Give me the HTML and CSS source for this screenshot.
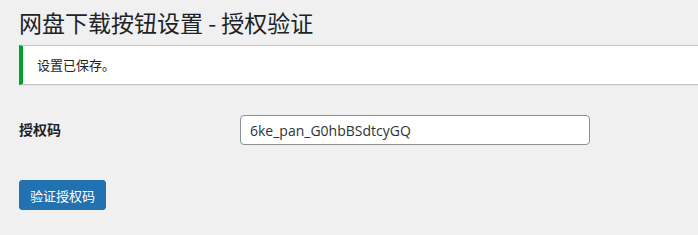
FILE: index.html
```html
<!DOCTYPE html>
<html>
<head>
<meta charset="utf-8">
<title>网盘下载按钮设置 - 授权验证</title>
<link rel="stylesheet" href="styles.css">
</head>
<body>
<div class="wrap">
	<h1 class="title">网盘下载按钮设置 - 授权验证</h1>
	<div class="notice">
		<p>设置已保存。</p>
	</div>
	<form class="form">
		<div class="row">
			<label class="label" for="code">授权码</label>
			<input id="code" class="field" type="text" value="6ke_pan_G0hbBSdtcyGQ">
		</div>
		<div class="submit">
			<button type="button" class="btn">验证授权码</button>
		</div>
	</form>
</div>
</body>
</html>
```

FILE: styles.css
```css
*{ margin:0; padding:0; box-sizing:border-box;}
html, body{ overflow:hidden;}
body{ background:#f0f0f1; color:#1d2327; font:13px/1.4 "Noto Sans","Noto Sans CJK SC",sans-serif;}
.wrap{ padding:7px 0 0 19px; margin-right:-12px;}
.title{ font-size:23px; font-weight:400; line-height:30px; color:#1d2327; font-family:"Noto Sans CJK SC","Noto Sans",sans-serif;}
.notice{ margin-top:8px; background:#fff; border:1px solid #c3c4c7; border-left:4px solid #00a32a; box-shadow:0 1px 1px rgba(0,0,0,.04); height:40px; display:flex; align-items:center; padding-left:14px;}
.notice p{ font-size:13px; font-family:"Noto Sans CJK SC",sans-serif;}
.form{ padding-top:30px;}
.row{ display:grid; grid-template-columns:221px 350px; align-items:center;}
.label{ font-size:14px; font-weight:700; font-family:"Noto Sans CJK SC",sans-serif; color:#1d2327;}
.field{ width:350px; height:30px; border:1px solid #8c8f94; border-radius:4px; background:#fff; padding:0 9px; font:14px "Open Sans","Noto Sans",sans-serif; color:#2c3338; outline:none;}
.submit{ padding-top:35px;}
.btn{ width:87px; height:30px; background:#2271b1; border:1px solid #2271b1; border-radius:3px; color:#fff; font:13px "Noto Sans CJK SC",sans-serif; cursor:pointer;}
```
